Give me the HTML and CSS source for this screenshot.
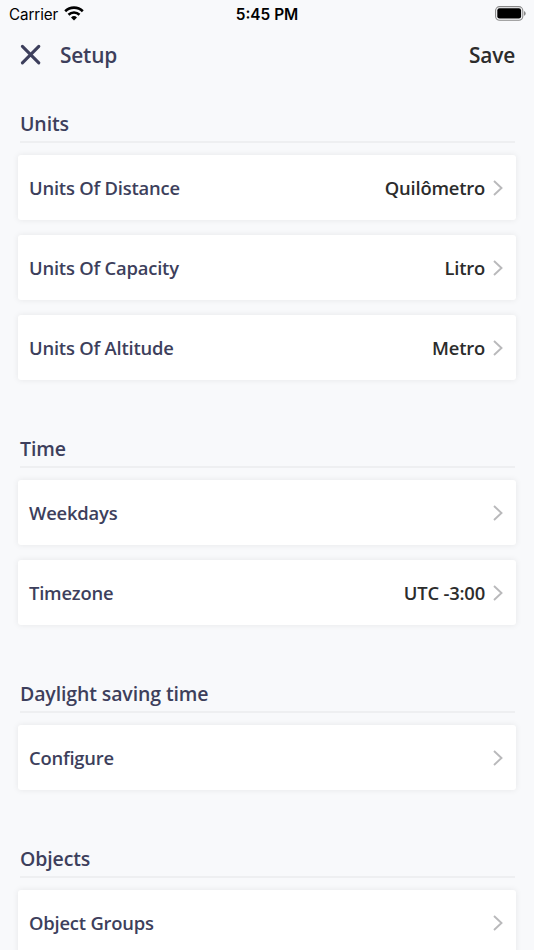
FILE: index.html
```html
<!DOCTYPE html>
<html lang="en">
<head>
<meta charset="utf-8">
<title>Setup</title>
<link rel="stylesheet" href="styles.css">
</head>
<body>
<div class="status">
  <div class="carrier"><span class="name">Carrier</span>
    <svg class="wifi" width="20" height="15" viewBox="0 0 20 15"><path d="M10 14.4 7 11.4a4.4 4.4 0 0 1 6 0z" fill="#000"/><path d="M4.5 8.7a8 8 0 0 1 11 0M1.2 5.2a12.6 12.6 0 0 1 17.6 0" fill="none" stroke="#000" stroke-width="2.6"/></svg>
  </div>
  <div class="clock">5:45 PM</div>
  <svg class="battery" width="31" height="15" viewBox="0 0 31 15"><rect x=".6" y=".6" width="27.2" height="13.6" rx="4" fill="none" stroke="#888" stroke-width="1.1"/><rect x="2.3" y="2.3" width="23.8" height="10.2" rx="2.2"/><path d="M29 5v4.8q1.7-.8 1.7-2.4T29 5z" fill="#888"/></svg>
</div>
<header class="bar">
  <svg class="close" width="22" height="22" viewBox="0 0 22 22"><path d="M2.4 2.4l16.4 16.4M18.8 2.4L2.4 18.8"/></svg>
  <h1>Setup</h1>
  <button class="save">Save</button>
</header>
<main>
  <section>
    <h2>Units</h2>
    <div class="row"><span>Units Of Distance</span><b>Quilômetro</b><svg class="chev" viewBox="0 0 10 16"><path d="M1 1l7.5 7L1 15"/></svg></div>
    <div class="row"><span>Units Of Capacity</span><b>Litro</b><svg class="chev" viewBox="0 0 10 16"><path d="M1 1l7.5 7L1 15"/></svg></div>
    <div class="row"><span>Units Of Altitude</span><b>Metro</b><svg class="chev" viewBox="0 0 10 16"><path d="M1 1l7.5 7L1 15"/></svg></div>
  </section>
  <section>
    <h2>Time</h2>
    <div class="row"><span>Weekdays</span><svg class="chev" viewBox="0 0 10 16"><path d="M1 1l7.5 7L1 15"/></svg></div>
    <div class="row"><span>Timezone</span><b>UTC -3:00</b><svg class="chev" viewBox="0 0 10 16"><path d="M1 1l7.5 7L1 15"/></svg></div>
  </section>
  <section>
    <h2>Daylight saving time</h2>
    <div class="row"><span>Configure</span><svg class="chev" viewBox="0 0 10 16"><path d="M1 1l7.5 7L1 15"/></svg></div>
  </section>
  <section>
    <h2>Objects</h2>
    <div class="row"><span>Object Groups</span><svg class="chev" viewBox="0 0 10 16"><path d="M1 1l7.5 7L1 15"/></svg></div>
  </section>
</main>
</body>
</html>
```

FILE: styles.css
```css
* { box-sizing: border-box; }
html, body { margin: 0; height: 950px; overflow: hidden; }
body { display: flex; flex-direction: column; background: #f8f9fb; color: #3d3f5c; font-family: "Open Sans", sans-serif; font-weight: 560; }
.status { flex: none; height: 27px; display: grid; grid-template-columns: 1fr auto 1fr; align-items: center; padding: 0 8px 0 9px; font-family: Inter, sans-serif; color: #000; }
.carrier { display: flex; align-items: center; gap: 6px; font-weight: 400; }
.name { font-size: 15.2px; letter-spacing: -.1px; padding-top: 1px; }
.wifi { margin-top: -1px; }
.clock { font-weight: 600; font-size: 15.4px; padding: 1px 1px 0 0; }
.battery { justify-self: end; }
.bar { flex: none; height: 56px; display: flex; align-items: center; padding: 0 19px 0 20px; }
.close { fill: none; stroke: #3d3f5c; stroke-width: 3.1; stroke-linecap: round; }
h1 { margin: 0 auto 0 18px; padding-bottom: 1px; font-size: 20.9px; font-weight: 560; letter-spacing: -.2px; }
.save { border: 0; padding: 0 0 1px; background: none; font: 560 20.9px "Open Sans", sans-serif; letter-spacing: -.2px; color: #2c2c2c; }
main { flex: 1; min-height: 0; overflow: hidden; padding: 22px 18px 0; }
section { margin-bottom: 50px; }
h2 { margin: 0 1px 12px 2px; height: 38px; line-height: 37px; font-size: 19.5px; font-weight: 560; letter-spacing: -.12px; border-bottom: 2px solid #eeeff1; }
.row { height: 65px; margin: 0 0 15px; padding: 0 13px 0 11px; display: flex; align-items: center; background: #fff; border-radius: 3px; box-shadow: 0 0 6px rgba(0,0,0,.08); font-size: 18.4px; letter-spacing: -.2px; }
.row span, .row b { padding-bottom: 1px; }
.row span { margin-right: auto; }
.row b { font-weight: 560; color: #2c2c2c; margin-right: 8px; }
.chev { width: 10px; height: 16px; fill: none; stroke: #b9b9bb; stroke-width: 1.9; }
```
